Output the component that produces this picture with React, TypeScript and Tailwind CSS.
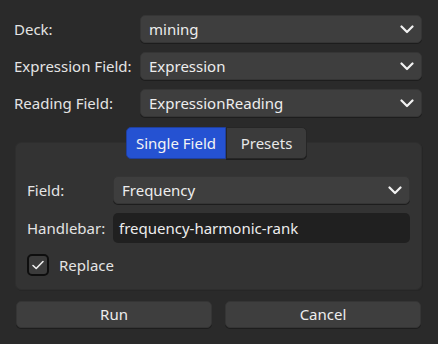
import React from "react";

const font = { fontFamily: '"Noto Sans", "Open Sans", sans-serif' };

function Chevron() {
  return (
    <svg width="14" height="9" viewBox="0 0 14 9" className="shrink-0">
      <path d="M1.5 1.5 L7 7 L12.5 1.5" fill="none" stroke="#f2f2f2" strokeWidth="2.2" strokeLinecap="round" strokeLinejoin="round" />
    </svg>
  );
}

function Combo({ value, className = "" }: { value: string; className?: string }) {
  return (
    <div
      className={
        "flex h-[28px] items-center justify-between rounded-[5px] bg-[#3e3e3e] pl-[8px] pr-[7px] text-[#ededed] border border-[#353535] shadow-[0_1px_0_#1d1d1d] " +
        className
      }
    >
      <span>{value}</span>
      <Chevron />
    </div>
  );
}

export default function App() {
  return (
    <div
      style={font}
      className="flex h-[344px] w-[438px] flex-col bg-[#2a2a2a] text-[15px] leading-none text-[#e4e4e4]"
    >
      <div className="flex flex-col gap-[9px] pl-[14px] pr-[16px] pt-[15px]">
        <div className="flex items-center">
          <span className="w-[126px]">Deck:</span>
          <Combo value="mining" className="flex-1" />
        </div>
        <div className="flex items-center">
          <span className="w-[126px]">Expression Field:</span>
          <Combo value="Expression" className="flex-1" />
        </div>
        <div className="flex items-center">
          <span className="w-[126px]">Reading Field:</span>
          <Combo value="ExpressionReading" className="flex-1" />
        </div>
      </div>

      <div className="relative z-10 mt-[10px] flex justify-center pr-[5px]">
        <div className="flex h-[32px] w-[100px] items-center justify-center rounded-l-[5px] border border-[#1f3f9e] bg-[#2552d2] text-[#f4f4f4]">
          Single Field
        </div>
        <div className="flex h-[32px] w-[81px] items-center justify-center rounded-r-[5px] border border-[#262626] bg-[#3b3b3b] text-[#e8e8e8] shadow-[0_1px_0_#1d1d1d]">
          Presets
        </div>
      </div>

      <div className="mx-[15px] mt-[-17px] flex h-[148px] w-[407px] flex-col rounded-[6px] border border-[#2e2e2e] bg-[#333333] px-[11px] pt-[33px] shadow-[1px_1px_0_#262626]">
        <div className="flex items-center">
          <span className="w-[86px]">Field:</span>
          <Combo value="Frequency" className="flex-1" />
        </div>
        <div className="mt-[9px] flex items-center">
          <span className="w-[86px]">Handlebar:</span>
          <div className="flex h-[30px] flex-1 items-center rounded-[5px] bg-[#202020] pl-[6px] text-[#ededed]">
            frequency-harmonic-rank
          </div>
        </div>
        <div className="mt-[11px] flex items-center">
          <div className="flex h-[22px] w-[22px] items-center justify-center rounded-[5px] border-[2px] border-[#0e0e0e] bg-[#3b3b3b]">
            <svg width="14" height="12" viewBox="0 0 14 12">
              <path d="M2 6.5 L5.2 9.5 L12 2.5" fill="none" stroke="#f0f0f0" strokeWidth="1.6" strokeLinecap="round" strokeLinejoin="round" />
            </svg>
          </div>
          <span className="ml-[10px]">Replace</span>
        </div>
      </div>

      <div className="mt-[11px] flex gap-[13px] pl-[16px] pr-[17px]">
        <div className="flex h-[27px] flex-1 items-center justify-center rounded-[5px] border border-[#353535] bg-[#3e3e3e] text-[#ededed] shadow-[0_1px_0_#1d1d1d]">
          Run
        </div>
        <div className="flex h-[27px] flex-1 items-center justify-center rounded-[5px] border border-[#353535] bg-[#3e3e3e] text-[#ededed] shadow-[0_1px_0_#1d1d1d]">
          Cancel
        </div>
      </div>
    </div>
  );
}
